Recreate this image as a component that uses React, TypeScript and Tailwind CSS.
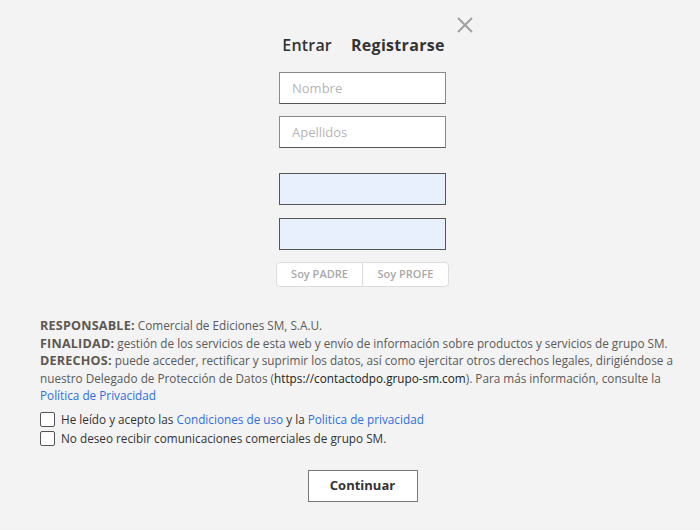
import React from "react";

export default function App() {
  const font = { fontFamily: '"Open Sans", "Liberation Sans", sans-serif' };
  const label = "font-bold text-[#5e5852] text-[12.6px] tracking-[0.2px]";
  return (
    <div className="w-[700px] h-[530px] bg-[#f3f3f3] text-[#555]" style={font}>
      <div className="relative flex flex-col items-center pt-[33px] pl-[25px]">
        <button className="absolute left-[456px] top-[16px] text-[#a0a0a0]">
          <svg width="18" height="18" viewBox="0 0 18 18" stroke="currentColor" strokeWidth="2" fill="none">
            <path d="M2 2 L16 16 M16 2 L2 16" />
          </svg>
        </button>
        <div className="flex gap-[19px] text-[16px] leading-[24px] text-[#333] pl-[2px]">
          <span className="font-semibold tracking-[0.2px]">Entrar</span>
          <span className="font-bold tracking-[0.3px]">Registrarse</span>
        </div>
        <div className="flex flex-col mt-[15px] w-[167px]">
          <input placeholder="Nombre" className="h-[32px] bg-white border border-[#8a8a8a] border-b-[#555] px-[12px] text-[13px] placeholder:text-[#b5b5b5] outline-none" />
          <input placeholder="Apellidos" className="mt-[12px] h-[32px] bg-white border border-[#8a8a8a] border-b-[#555] px-[12px] text-[13px] placeholder:text-[#b5b5b5] outline-none" />
          <input className="mt-[25px] h-[32px] bg-[#e8f0fe] border border-[#555] px-[12px] text-[13px] outline-none" />
          <input className="mt-[13px] h-[32px] bg-[#e8f0fe] border border-[#555] px-[12px] text-[13px] outline-none" />
        </div>
        <div className="mt-[12px] flex h-[25px] w-[173px] bg-white border border-[#dcdcdc] rounded-[4px] text-[11px] font-semibold text-[#a8a8a8]">
          <div className="flex-1 flex items-center justify-center border-r border-[#dcdcdc]">Soy PADRE</div>
          <div className="flex-1 flex items-center justify-center">Soy PROFE</div>
        </div>
      </div>
      <div className="pl-[40px] pr-[10px] mt-[30px] text-[11.75px] leading-[17.6px] text-[#5a5a5a] whitespace-nowrap">
        <p>
          <b className={label}>RESPONSABLE:</b> Comercial de Ediciones SM, S.A.U.
        </p>
        <p>
          <b className={label}>FINALIDAD:</b> gestión de los servicios de esta web y envío de información sobre productos y servicios de grupo SM.
        </p>
        <p>
          <b className={label}>DERECHOS:</b> puede acceder, rectificar y suprimir los datos, así como ejercitar otros derechos legales, dirigiéndose a
          <br />
          nuestro Delegado de Protección de Datos (<span className="text-[#222]">https://contactodpo.grupo-sm.com</span>). Para más información, consulte la
          <br />
          <a className="text-[#2f6fe0]">Política de Privacidad</a>
        </p>
        <div className="mt-[6px] flex flex-col gap-[1px]">
          <label className="flex items-center gap-[6px] text-[#333] h-[18px]">
            <span className="w-[15px] h-[15px] border border-[#555] bg-white rounded-[2px]"></span>
            <span>He leído y acepto las <a className="text-[#2f6fe0]">Condiciones de uso</a> y la <a className="text-[#2f6fe0]">Politica de privacidad</a></span>
          </label>
          <label className="flex items-center gap-[6px] text-[#333] h-[18px]">
            <span className="w-[15px] h-[15px] border border-[#555] bg-white rounded-[2px]"></span>
            <span>No deseo recibir comunicaciones comerciales de grupo SM.</span>
          </label>
        </div>
      </div>
      <div className="flex justify-center mt-[22px] pl-[25px]">
        <button className="w-[110px] h-[32px] bg-white border border-[#777] text-[13px] font-bold text-[#333]">Continuar</button>
      </div>
    </div>
  );
}
